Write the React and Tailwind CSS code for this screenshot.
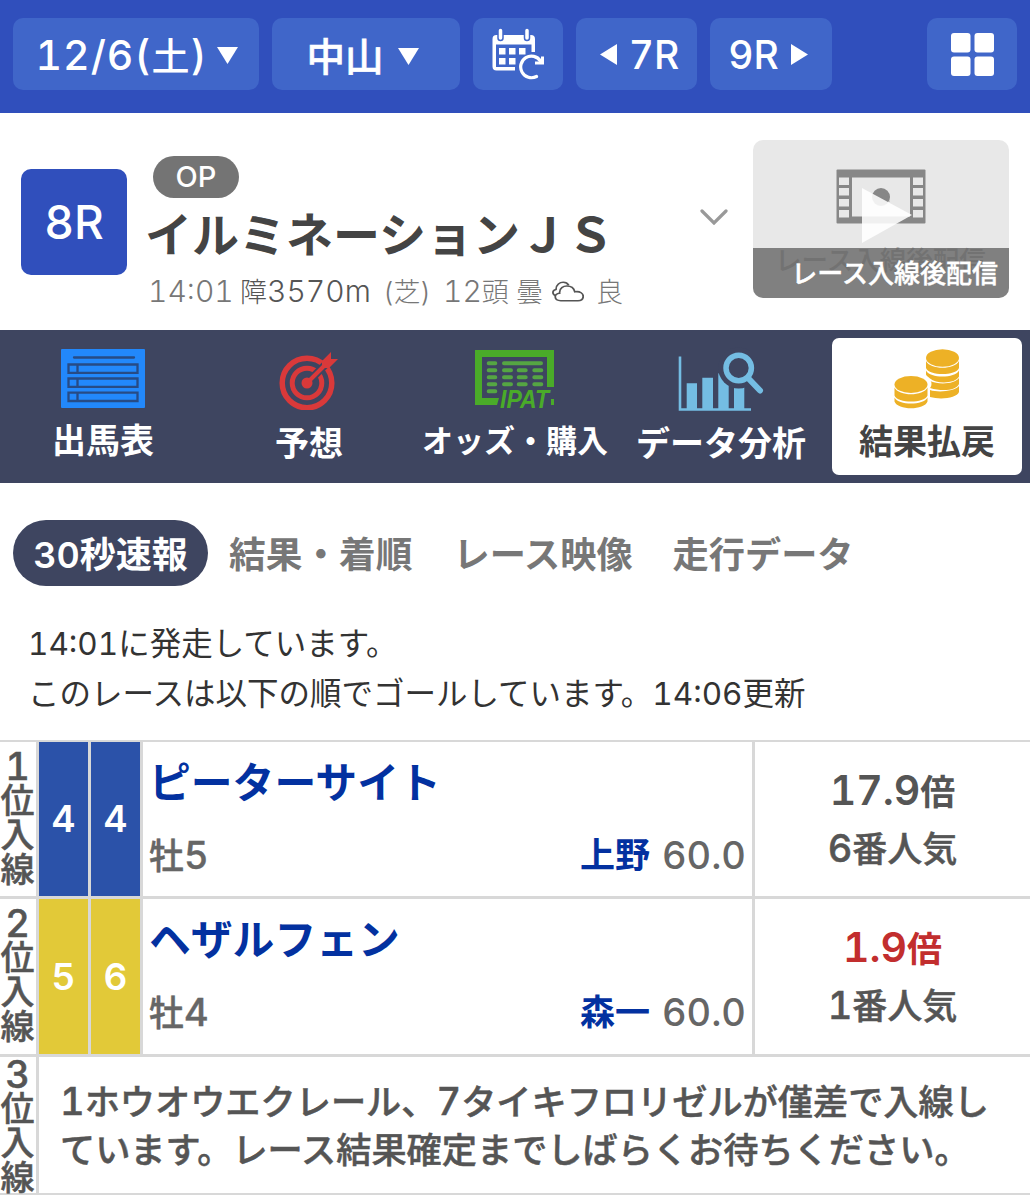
const NAV_ITEMS = [
  { label: "出馬表", icon: <EntryIcon />, size: "text-[34px]", pad: "pt-[11px]" },
  { label: "予想", icon: <TargetIcon />, size: "text-[34px]", pad: "pt-[14px]" },
  { label: "オッズ・購入", icon: <OddsIcon />, size: "text-[31px]", pad: "pt-[11px]" },
  { label: "データ分析", icon: <AnalysisIcon />, size: "text-[34px]", pad: "pt-[14px]" },
];

const RESULTS = [
  {
    rank: "1",
    frame: "4",
    number: "4",
    color: "bg-[#2b52a9]",
    name: "ピーターサイト",
    sex: "牡",
    age: "5",
    jockey: "上野",
    weight: "60.0",
    odds: "17.9",
    oddsColor: "text-[#555]",
    popular: "6",
    height: "h-[157px]",
  },
  {
    rank: "2",
    frame: "5",
    number: "6",
    color: "bg-[#e2c938]",
    name: "ヘザルフェン",
    sex: "牡",
    age: "4",
    jockey: "森一",
    weight: "60.0",
    odds: "1.9",
    oddsColor: "text-[#c22e2e]",
    popular: "1",
    height: "h-[158px]",
  },
];

function CalendarIcon() {
  return (
    <svg className="h-[52px] w-[54px]" viewBox="0 0 54 52" fill="none">
      <path d="M1.500 11a4 4 0 0 1 4-4H40a4 4 0 0 1 4 4v13h-3.500v-7.500H5v22.500h19v3.500H5.500a4 4 0 0 1-4-4z" fill="#fff" />
      <path d="M9.500 4v6M36 4v6" stroke="#4066c9" strokeWidth="6.500" strokeLinecap="round" />
      <path d="M9.500 2.500v7.500M36 2.500v7.500" stroke="#fff" strokeWidth="3.500" strokeLinecap="round" />
      <path d="M8 20h6.500v6.500H8zM18 20h6.500v6.500H18zM28 20h6.500v6.500H28zM8 30h6.500v6.500H8zM18 30h6.500v6.500H18z" fill="#fff" />
      <path d="M45.500 48.500A10.800 10.800 0 1 1 49.500 33" stroke="#fff" strokeWidth="3.200" strokeLinecap="round" />
      <path d="M51.500 28.500V35h-7.500" stroke="#fff" strokeWidth="3" />
    </svg>
  );
}

function GridIcon() {
  return (
    <svg className="h-[43px] w-[43px]" viewBox="0 0 43 43" fill="#fff">
      <rect width="19.500" height="19.500" rx="3" />
      <rect x="23.500" width="19.500" height="19.500" rx="3" />
      <rect y="23.500" width="19.500" height="19.500" rx="3" />
      <rect x="23.500" y="23.500" width="19.500" height="19.500" rx="3" />
    </svg>
  );
}

function CloudIcon() {
  return (
    <svg className="h-[21px] w-[32px] shrink-0" viewBox="0 0 80 62" preserveAspectRatio="none" fill="none" stroke="#555" strokeWidth="4.500">
      <path d="M22 58C4 58 4 37 19 36C18 20 29 15 37 15C48 15 55 22 57 32C71 29 78 38 78 45C78 54 72 58 65 58Z" />
      <path d="M9 43C0 39 0 27 10 25C10 10 20 4 28 4C35 4 39 7 42 13" />
    </svg>
  );
}

function FilmIcon() {
  return (
    <svg className="h-[76px] w-[90px]" viewBox="0 0 90 76">
      <rect x="0.500" y="0.500" width="89" height="54" rx="1" fill="#878787" />
      <rect x="16" y="8.500" width="58" height="39" fill="#e8e8e8" />
      <g fill="#e8e8e8">
        <rect x="3" y="8.500" width="10" height="7.500" />
        <rect x="3" y="19" width="10" height="7.500" />
        <rect x="3" y="30" width="10" height="7.500" />
        <rect x="3" y="41" width="10" height="7.500" />
        <rect x="77" y="8.500" width="10" height="7.500" />
        <rect x="77" y="19" width="10" height="7.500" />
        <rect x="77" y="30" width="10" height="7.500" />
        <rect x="77" y="41" width="10" height="7.500" />
      </g>
      <circle cx="45" cy="28" r="9" fill="#878787" />
      <path d="M26 19v55l50-28z" fill="#fff" opacity="0.880" />
      <path d="M38 24c4-4 11-2 13 3l3 6-9-5z" fill="#878787" opacity="0.700" />
    </svg>
  );
}

function EntryIcon() {
  return (
    <svg className="h-[59px] w-[84px]" viewBox="0 0 84 59" fill="none">
      <rect width="84" height="59" rx="1" fill="#2288fb" />
      <g stroke="#274b85" strokeWidth="2.300">
        <path d="M13 8.500h60" strokeLinecap="round" />
        <path d="M7.500 15.500h69v8.300h-69zM7.500 29.500h69v8.300h-69zM7.500 43.700h69v8.300h-69zM16.500 15.500v8M16.500 29.500v8M16.500 43.700v8" />
      </g>
    </svg>
  );
}

function TargetIcon() {
  return (
    <svg className="h-[58px] w-[60px]" viewBox="0 0 60 58" fill="none">
      <circle cx="28" cy="31" r="24.800" stroke="#d9393a" strokeWidth="5.500" />
      <circle cx="28" cy="31" r="14.800" stroke="#d9393a" strokeWidth="5" />
      <path d="M28 31L54 5" stroke="#3e4560" strokeWidth="8" />
      <circle cx="28" cy="31" r="5.500" fill="#d9393a" />
      <path d="M28 31L48 11" stroke="#d9393a" strokeWidth="4" />
      <path d="M43 16V9l9-9v7h7l-9 9z" fill="#d9393a" />
    </svg>
  );
}

function OddsIcon() {
  return (
    <svg className="h-[62px] w-[80px] overflow-visible" viewBox="0 0 80 62">
      <path d="M0 1h79v37h-7V8H7v41h17l-2 7H0zM76 50h3v6h-3z" fill="#4aab29" />
      <g stroke="#55a643" strokeWidth="4" strokeLinecap="round">
        <path d="M13.700 14.300h6.600M29 14.300h37M13.700 21.300h6.600M29 21.300h7M43.700 21.300h7M59.300 21.300h7M13.700 28.300h6.600M29 28.300h7M43.700 28.300h7M59.300 28.300h7M13.700 35.300h6.600M29 35.300h7M43.700 35.300h7M59.300 35.300h7M13.700 42.300h6.600" />
      </g>
      <text
        x="25"
        y="59"
        textLength="49"
        lengthAdjust="spacingAndGlyphs"
        className="font-['Liberation_Sans',sans-serif] text-[25px] font-bold italic"
        fill="#4aab29"
        stroke="#3e4560"
        strokeWidth="3"
        paintOrder="stroke"
      >
        IPAT
      </text>
    </svg>
  );
}

function AnalysisIcon() {
  return (
    <svg className="h-[59px] w-[84px] overflow-visible" viewBox="0 0 84 59" fill="none">
      <path d="M7.700 57V31.300H18V57M23.300 57V25.700H34V57M39.300 57V21l10.400 11v25M55 57V35h10.300v22" fill="#74bde3" />
      <path d="M1 4.500v53h71" stroke="#74bde3" strokeWidth="2.600" />
      <circle cx="59.700" cy="16" r="20.500" fill="#3e4560" />
      <circle cx="59.700" cy="16" r="12.700" stroke="#74bde3" strokeWidth="5.500" />
      <path d="M69.500 26.500l11.500 12" stroke="#74bde3" strokeWidth="6" strokeLinecap="round" />
    </svg>
  );
}

function CoinsIcon() {
  return (
    <svg className="h-[60px] w-[66px]" viewBox="0 0 66 60" fill="#edb126">
      <ellipse cx="48.500" cy="9" rx="16.500" ry="8.700" />
      <path d="M32 12c4 9 29 9 33 0v7c-3 8-30 8-33 0zM32 21.500c4 8 29 8 33 0v6c-3 7-22 8-29 2-2-2-4-3-4-4zM36 32c9 4 25 3 29-3v6c-2 6-16 8-29 4zM36 41c9 3 25 1 29-4v6c-2 6-18 8-29 5z" />
      <ellipse cx="17.500" cy="35" rx="20" ry="11" fill="#fff" />
      <ellipse cx="17" cy="35.500" rx="16.500" ry="8.500" />
      <path d="M.5 38.500c4 9 29 9 33 0v8c-3 8-30 8-33 0zM.5 48.500c4 8 29 8 33 0v4c-3 9-30 9-33 0z" />
    </svg>
  );
}

function TopButton({ className, children }) {
  return (
    <button className={`flex h-[72px] shrink-0 items-center justify-center rounded-[10px] bg-[#4066c9] text-white ${className}`}>
      {children}
    </button>
  );
}

function Header() {
  return (
    <header className="flex h-[113px] gap-[13px] bg-[#304fbc] px-[13px] pt-[18px] font-medium">
      <TopButton className="w-[246px] gap-[10px] pl-[2px]">
        <span className="pt-[4px] text-[41px] tracking-[1px]">
          12/6(<span className="text-[38px]">土</span>)
        </span>
        <svg className="mt-[3px] h-[17px] w-[21px]" viewBox="0 0 21 17" fill="#fff"><path d="M0 0h21L10.500 17z" /></svg>
      </TopButton>
      <TopButton className="w-[188px] gap-[14px] pr-[7px]">
        <span className="pt-[7px] text-[38.500px] [-webkit-text-stroke:0.6px]">中山</span>
        <svg className="mt-[4px] h-[17px] w-[21px]" viewBox="0 0 21 17" fill="#fff"><path d="M0 0h21L10.500 17z" /></svg>
      </TopButton>
      <TopButton className="w-[90px]">
        <CalendarIcon />
      </TopButton>
      <TopButton className="w-[121px] gap-[12px] pl-[6px]">
        <svg className="h-[21px] w-[17px]" viewBox="0 0 17 21" fill="#fff"><path d="M17 0v21L0 10.500z" /></svg>
        <span className="pt-[2px] text-[39px]">7R</span>
      </TopButton>
      <TopButton className="w-[122px] gap-[12px] pr-[6px]">
        <span className="pt-[2px] text-[39px]">9R</span>
        <svg className="h-[21px] w-[17px]" viewBox="0 0 17 21" fill="#fff"><path d="M0 0v21l17-10.500z" /></svg>
      </TopButton>
      <TopButton className="ml-auto w-[90px]">
        <GridIcon />
      </TopButton>
    </header>
  );
}

function RaceInfo() {
  return (
    <section className="flex h-[217px] pl-[21px]">
      <div className="mt-[56px] flex h-[106px] w-[106px] shrink-0 items-center justify-center rounded-[10px] bg-[#304fbc] text-[46px] font-medium text-white">
        8R
      </div>
      <div className="ml-[21px] w-[540px] shrink-0 pt-[43px]">
        <span className="ml-[5px] flex h-[42px] w-[86px] items-center justify-center rounded-full bg-[#747474] text-[29px] font-medium text-white">
          OP
        </span>
        <h1 className="-ml-[3px] mt-[8px] h-[58px] text-[47px] leading-[58px] font-bold whitespace-nowrap text-[#444]">
          イルミネーションＪＳ
        </h1>
        <div className="mt-[11px] flex h-[32px] items-baseline text-[27px] leading-[32px] font-light whitespace-nowrap text-[#777]">
          <span className="w-[92px] text-[30px]">14:01</span>
          <span className="w-[143px] text-[#555]">
            障<span className="text-[30px]">3570m</span>
          </span>
          <span className="w-[60px]">(芝)</span>
          <span className="w-[73px]">
            <span className="text-[30px]">12</span>頭
          </span>
          <span className="w-[36px]">曇</span>
          <CloudIcon />
          <span className="ml-[12px]">良</span>
        </div>
      </div>
      <svg className="mt-[96px] ml-[12px] h-[16px] w-[28px] shrink-0" viewBox="0 0 28 16" fill="none">
        <path d="M2 2l12 12L26 2" stroke="#999" strokeWidth="3.200" strokeLinecap="round" />
      </svg>
      <div className="relative mt-[27px] ml-[25px] h-[158px] w-[256px] shrink-0 overflow-hidden rounded-[10px] bg-[#e8e8e8]">
        <div className="flex justify-center pt-[29px]">
          <FilmIcon />
        </div>
        <div className="absolute inset-x-0 bottom-0 h-[50px] bg-[#808080]" />
        <span className="absolute top-[100px] left-[22px] text-[26.500px] leading-[40px] font-medium whitespace-nowrap text-[#727272]">
          レース入線後配信
        </span>
        <span className="absolute right-[11px] bottom-[4px] text-[26px] leading-[40px] font-medium whitespace-nowrap text-white [-webkit-text-stroke:0.4px]">
          レース入線後配信
        </span>
      </div>
    </section>
  );
}

function RaceNav() {
  return (
    <nav className="flex h-[153px] bg-[#3e4560] font-bold text-white">
      {NAV_ITEMS.map((item) => (
        <a key={item.label} className="flex w-[206px] shrink-0 flex-col items-center pt-[8px] whitespace-nowrap">
          <span className={`flex flex-col items-center ${item.pad}`}>
            <span className="h-[58px]">{item.icon}</span>
            <span className={`mt-[14px] leading-[40px] ${item.size}`}>{item.label}</span>
          </span>
        </a>
      ))}
      <a className="mt-[8px] ml-[8px] flex h-[137px] w-[190px] shrink-0 flex-col items-center rounded-[7px] bg-white pt-[11px] text-[#444]">
        <CoinsIcon />
        <span className="mt-[13px] text-[34px] leading-[40px]">結果払戻</span>
      </a>
    </nav>
  );
}

function SubTabs() {
  return (
    <div className="flex h-[66px] items-center pl-[13px] text-[36.700px] leading-[40px] font-bold whitespace-nowrap text-[#777]">
      <span className="flex h-[66px] w-[195px] items-center justify-center rounded-full bg-[#3e4560] pt-[3px] text-[36px] font-semibold text-white">
        30秒速報
      </span>
      <span className="ml-[21px] pt-[3px]">結果・着順</span>
      <span className="ml-[41px] pt-[3px] text-[36.200px]">レース映像</span>
      <span className="ml-[40px] pt-[3px] text-[36.200px]">走行データ</span>
    </div>
  );
}

function RankCell({ rank, pad = "pt-[7px]" }) {
  return (
    <div className={`flex w-[39px] shrink-0 flex-col items-center border-r-[3px] border-[#d8d8d8] pr-[1px] text-[34px] leading-[34.500px] font-medium text-[#555] [-webkit-text-stroke:0.5px] ${pad}`}>
      <span className="text-[38px] leading-[34.500px]">{rank}</span>
      <span>位</span>
      <span>入</span>
      <span>線</span>
    </div>
  );
}

function ResultRow({ row }) {
  return (
    <div className={`flex border-b-[3px] border-[#d8d8d8] ${row.height}`}>
      <RankCell rank={row.rank} />
      <div className={`flex w-[52px] shrink-0 items-center justify-center border-r-[3px] border-[#d8d8d8] text-[37px] font-semibold text-white ${row.color}`}>
        {row.frame}
      </div>
      <div className={`flex w-[52px] shrink-0 items-center justify-center border-r-[3px] border-[#d8d8d8] text-[37px] font-semibold text-white ${row.color}`}>
        {row.number}
      </div>
      <div className="flex w-[612px] shrink-0 flex-col border-r-[3px] border-[#d8d8d8] pt-[16px] pr-[6px] pl-[6px]">
        <span className="text-[41.800px] leading-[50px] font-bold text-[#0331a0]">{row.name}</span>
        <div className="mt-[22px] flex justify-between text-[35px] leading-[50px] font-medium text-[#666]">
          <span className="[-webkit-text-stroke:0.4px]">
            {row.sex}
            <span className="text-[38px]">{row.age}</span>
          </span>
          <span className="flex gap-[12px]">
            <span className="font-bold text-[#0331a0]">{row.jockey}</span>
            <span className="text-[38px]">{row.weight}</span>
          </span>
        </div>
      </div>
      <div className="flex grow flex-col items-center pt-[19px] text-[35px] font-medium text-[#555]">
        <span className={`leading-[58px] font-semibold ${row.oddsColor}`}>
          <span className="text-[41px]">{row.odds}</span>倍
        </span>
        <span className="-mt-[2px] leading-[58px] [-webkit-text-stroke:0.5px]">
          <span className="text-[38px]">{row.popular}</span>番人気
        </span>
      </div>
    </div>
  );
}

export default function App() {
  return (
    <div className="h-[1200px] w-[1030px] overflow-hidden bg-white font-['Inter','Noto_Sans_CJK_JP',sans-serif] tabular-nums">
      <Header />
      <RaceInfo />
      <RaceNav />
      <div className="pt-[37px]">
        <SubTabs />
        <div className="mt-[33px] pl-[28px] text-[31.500px] leading-[50px] whitespace-nowrap text-[#333]">
          <p>14:01に発走しています。</p>
          <p>このレースは以下の順でゴールしています。14:06更新</p>
        </div>
      </div>
      <div className="mt-[21px] border-t-2 border-[#d8d8d8]">
        {RESULTS.map((row) => (
          <ResultRow key={row.rank} row={row} />
        ))}
        <div className="flex h-[138px] border-b-2 border-[#d8d8d8]">
          <RankCell rank="3" pad="pt-0" />
          <p className="pt-[20px] pl-[21px] text-[35.200px] leading-[48px] font-medium whitespace-nowrap text-[#555] [-webkit-text-stroke:0.5px]">
            <span className="text-[38px]">1</span>ホウオウエクレール、<span className="text-[38px]">7</span>タイキフロリゼルが僅差で入線し
            <br />
            ています。レース結果確定までしばらくお待ちください。
          </p>
        </div>
      </div>
    </div>
  );
}
